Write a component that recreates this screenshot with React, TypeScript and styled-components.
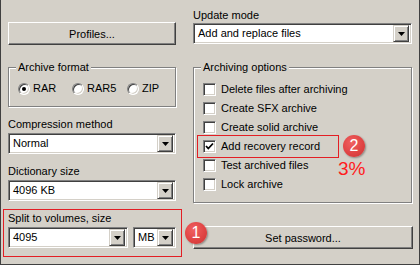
import React from 'react';
import styled, { createGlobalStyle, css } from 'styled-components';

const GlobalStyle = createGlobalStyle`
  html, body {
    margin: 0;
    padding: 0;
    background: #d4d0c8;
  }
`;

const raised = css`
  border: 1px solid;
  border-color: #fff #404040 #404040 #fff;
  box-shadow: inset -1px -1px #808080;
`;

const sunken = css`
  border: 1px solid;
  border-color: #808080 #fff #fff #808080;
  box-shadow: inset 1px 1px #404040, inset -1px -1px #d4d0c8;
`;

const Window = styled.div`
  box-sizing: border-box;
  width: 420px;
  height: 265px;
  padding: 0 7px;
  background: #d4d0c8;
  border: 1px solid #404040;
  border-top: none;
  display: grid;
  grid-template-columns: 168px 219px;
  column-gap: 17px;
  align-items: start;
  font: 11px "Liberation Sans", Arial, sans-serif;
  color: #000;
`;

const Column = styled.div`
  display: flex;
  flex-direction: column;
`;

const Button = styled.button<{ $top: number; $width?: number }>`
  box-sizing: border-box;
  margin-top: ${p => p.$top}px;
  width: ${p => (p.$width ? `${p.$width}px` : '100%')};
  height: 23px;
  padding: 0;
  background: #d4d0c8;
  ${raised};
  font: inherit;
  color: #000;
  text-align: center;
`;

const ButtonSlot = styled.div<{ $top: number }>`
  position: relative;
  margin-top: ${p => p.$top}px;
`;

const GroupBox = styled.div<{ $top: number; $height: number }>`
  position: relative;
  box-sizing: border-box;
  margin-top: ${p => p.$top}px;
  height: ${p => p.$height}px;
  border: 1px solid #808080;
  box-shadow: inset 1px 1px #fff, 1px 1px #fff;
`;

const Legend = styled.span`
  position: absolute;
  top: -7px;
  left: 7px;
  padding: 0 2px;
  line-height: 13px;
  background: #d4d0c8;
`;

const RadioRow = styled.div`
  display: flex;
  padding: 14px 0 0 9px;
`;

const RadioItem = styled.label<{ $width?: number }>`
  display: flex;
  align-items: center;
  gap: 3px;
  width: ${p => (p.$width ? `${p.$width}px` : 'auto')};
  line-height: 13px;
`;

const RadioDot = styled.span<{ $on?: boolean }>`
  position: relative;
  box-sizing: border-box;
  width: 12px;
  height: 12px;
  border-radius: 50%;
  background: #fff;
  ${sunken};

  &::after {
    content: '';
    display: ${p => (p.$on ? 'block' : 'none')};
    position: absolute;
    left: 3px;
    top: 3px;
    width: 4px;
    height: 4px;
    border-radius: 50%;
    background: #000;
  }
`;

const FieldLabel = styled.div<{ $top: number; $gap?: number }>`
  margin-top: ${p => p.$top}px;
  margin-bottom: ${p => p.$gap ?? 2}px;
  line-height: 13px;
  white-space: nowrap;
`;

const ComboRow = styled.div`
  display: flex;
  gap: 5px;
`;

const ComboBox = styled.div<{ $width?: number }>`
  box-sizing: border-box;
  display: flex;
  align-items: center;
  width: ${p => (p.$width ? `${p.$width}px` : '100%')};
  height: 21px;
  padding: 2px;
  background: #fff;
  ${sunken};
`;

const ComboText = styled.span`
  flex: 1;
  padding-left: 2px;
  line-height: 13px;
  white-space: nowrap;
  overflow: hidden;
`;

const DropButton = styled.span`
  box-sizing: border-box;
  display: flex;
  align-items: center;
  justify-content: center;
  width: 16px;
  height: 17px;
  background: #d4d0c8;
  border: 1px solid;
  border-color: #d4d0c8 #404040 #404040 #d4d0c8;
  box-shadow: inset 1px 1px #fff, inset -1px -1px #808080;
`;

const SplitSection = styled.div<{ $top: number }>`
  position: relative;
  margin-top: ${p => p.$top}px;

  &::after {
    content: '';
    position: absolute;
    top: -3px;
    left: -5px;
    right: -6px;
    bottom: -9px;
    border: 1px solid #e31e24;
    pointer-events: none;
  }
`;

const CheckList = styled.div`
  display: flex;
  flex-direction: column;
  gap: 6px;
  padding: 15px 0 0 9px;
`;

const CheckRow = styled.label<{ $marked?: boolean }>`
  position: relative;
  display: flex;
  align-items: center;
  gap: 5px;
  height: 13px;
  line-height: 13px;
  white-space: nowrap;

  ${p =>
    p.$marked &&
    css`
      &::after {
        content: '';
        position: absolute;
        top: -5px;
        left: -6px;
        width: 140px;
        height: 21px;
        border: 1px solid #e31e24;
      }
    `}
`;

const CheckBox = styled.span`
  box-sizing: border-box;
  display: flex;
  align-items: center;
  justify-content: center;
  flex: none;
  width: 13px;
  height: 13px;
  background: #fff;
  ${sunken};
`;

const Badge = styled.span<{ $x: number; $y: number }>`
  position: absolute;
  left: ${p => p.$x}px;
  top: ${p => p.$y}px;
  z-index: 2;
  display: flex;
  align-items: center;
  justify-content: center;
  width: 22px;
  height: 22px;
  border-radius: 50%;
  background: radial-gradient(circle at 40% 35%, #f06161 0%, #e04444 55%, #c93434 100%);
  box-shadow: 1px 1px 2px rgba(0, 0, 0, 0.35);
  color: #fff;
  font: 16px "Liberation Sans", Arial, sans-serif;
  line-height: 22px;
`;

const Percent = styled.span`
  position: absolute;
  left: 135px;
  top: 19px;
  color: #ff1c1c;
  font: 19px "Liberation Sans", Arial, sans-serif;
  line-height: 19px;
`;

function Arrow() {
  return (
    <svg width="7" height="4" viewBox="0 0 7 4">
      <polygon points="0,0 7,0 3.5,4" fill="#000" />
    </svg>
  );
}

function Check() {
  return (
    <svg width="9" height="9" viewBox="0 0 9 9">
      <polyline points="1,4 3.3,6.5 8,1.5" fill="none" stroke="#000" strokeWidth="1.8" />
    </svg>
  );
}

function Combo({ value, width }: { value: string; width?: number }) {
  return (
    <ComboBox $width={width}>
      <ComboText>{value}</ComboText>
      <DropButton>
        <Arrow />
      </DropButton>
    </ComboBox>
  );
}

const options = [
  { label: 'Delete files after archiving' },
  { label: 'Create SFX archive' },
  { label: 'Create solid archive' },
  { label: 'Add recovery record', checked: true, marked: true },
  { label: 'Test archived files' },
  { label: 'Lock archive' },
];

export default function App() {
  return (
    <>
      <GlobalStyle />
      <Window>
        <Column>
          <Button $top={22}>Profiles...</Button>

          <GroupBox $top={22} $height={40}>
            <Legend>Archive format</Legend>
            <RadioRow>
              <RadioItem $width={54}>
                <RadioDot $on />
                RAR
              </RadioItem>
              <RadioItem $width={55}>
                <RadioDot />
                RAR5
              </RadioItem>
              <RadioItem>
                <RadioDot />
                ZIP
              </RadioItem>
            </RadioRow>
          </GroupBox>

          <FieldLabel $top={11}>Compression method</FieldLabel>
          <Combo value="Normal" />

          <FieldLabel $top={11}>Dictionary size</FieldLabel>
          <Combo value="4096 KB" />

          <SplitSection $top={11}>
            <FieldLabel $top={0}>Split to volumes, size</FieldLabel>
            <ComboRow>
              <Combo value="4095" width={120} />
              <Combo value="MB" width={43} />
            </ComboRow>
          </SplitSection>
        </Column>

        <Column>
          <FieldLabel $top={9} $gap={1}>Update mode</FieldLabel>
          <Combo value="Add and replace files" />

          <GroupBox $top={23} $height={136}>
            <Legend>Archiving options</Legend>
            <CheckList>
              {options.map(o => (
                <CheckRow key={o.label} $marked={o.marked}>
                  <CheckBox>{o.checked && <Check />}</CheckBox>
                  {o.label}
                  {o.marked && (
                    <>
                      <Badge $x={140} $y={-5}>2</Badge>
                      <Percent>3%</Percent>
                    </>
                  )}
                </CheckRow>
              ))}
            </CheckList>
          </GroupBox>

          <ButtonSlot $top={23}>
            <Button $top={0} $width={220}>Set password...</Button>
            <Badge $x={-8} $y={-4}>1</Badge>
          </ButtonSlot>
        </Column>
      </Window>
    </>
  );
}
